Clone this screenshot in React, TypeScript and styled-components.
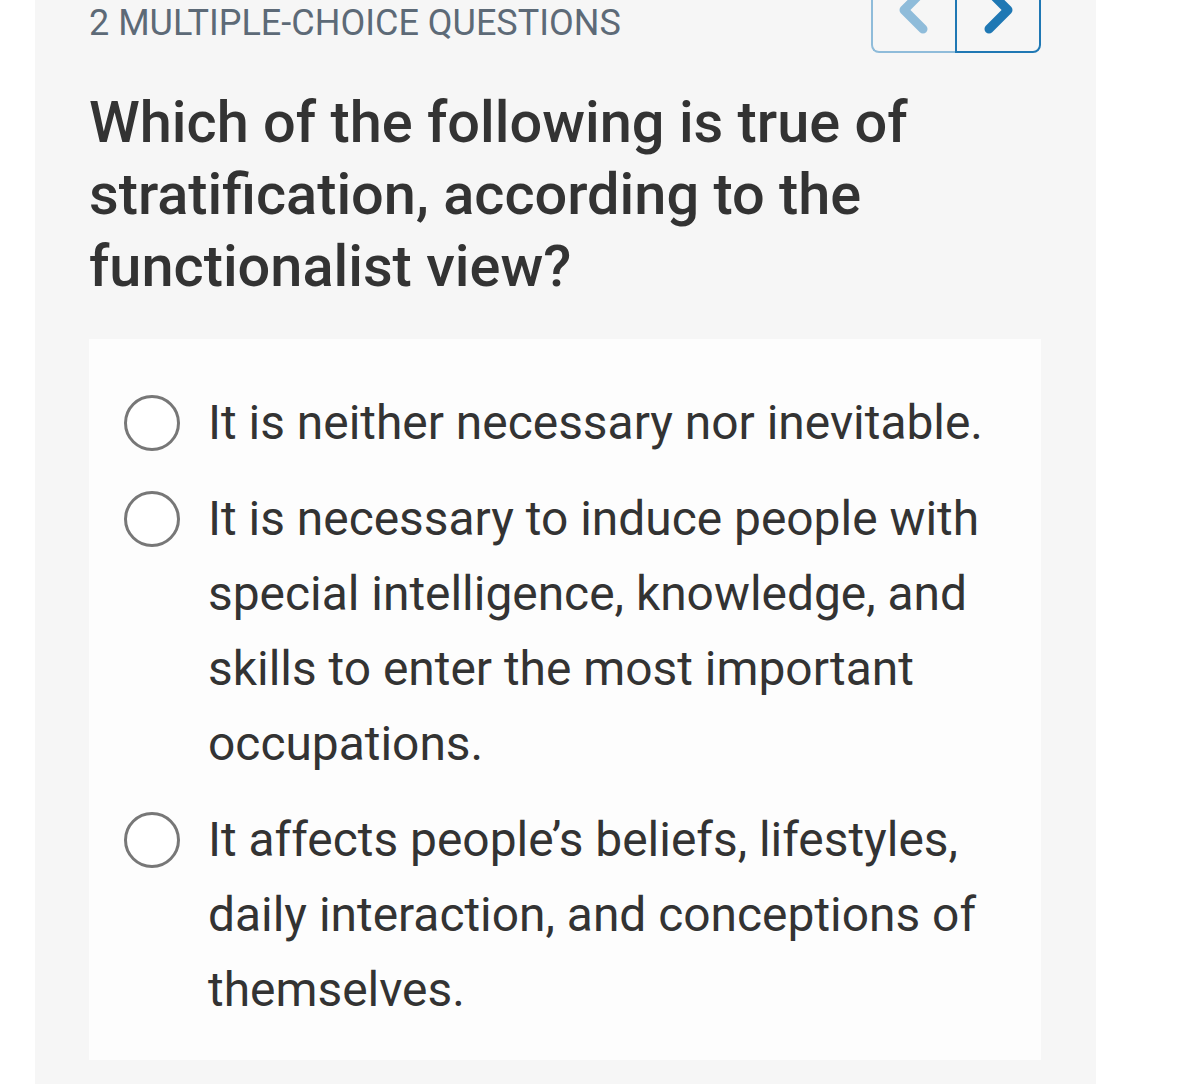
import React from 'react';
import styled, { createGlobalStyle } from 'styled-components';

interface ChevronProps {
  dir: 'left' | 'right';
}

interface NavButtonProps {
  active?: boolean;
}

const options = [
  'It is neither necessary nor inevitable.',
  'It is necessary to induce people with special intelligence, knowledge, and skills to enter the most important occupations.',
  'It affects people’s beliefs, lifestyles, daily interaction, and conceptions of themselves.',
];

const Chevron = ({ dir }: ChevronProps) => (
  <svg width="36" height="54" viewBox="0 0 36 54" fill="none">
    <path
      d={dir === 'left' ? 'M27 8 L8 27 L27 46' : 'M9 8 L28 27 L9 46'}
      stroke="currentColor"
      strokeWidth="9"
      strokeLinecap="round"
      strokeLinejoin="round"
    />
  </svg>
);

const App = () => {
  return (
    <>
      <GlobalStyle />
      <Panel>
        <HeaderRow>
          <SectionLabel>2 MULTIPLE-CHOICE QUESTIONS</SectionLabel>
          <NavGroup>
            <NavButton aria-label="previous">
              <Chevron dir="left" />
            </NavButton>
            <NavButton active aria-label="next">
              <Chevron dir="right" />
            </NavButton>
          </NavGroup>
        </HeaderRow>

        <Question>
          Which of the following is true of stratification, according to the
          functionalist view?
        </Question>

        <AnswerCard>
          {options.map((text) => (
            <Option key={text}>
              <Radio />
              <OptionText>{text}</OptionText>
            </Option>
          ))}
        </AnswerCard>
      </Panel>
    </>
  );
};

const GlobalStyle = createGlobalStyle`
  body {
    margin: 0;
    background: #ffffff;
    font-family: Roboto, "Noto Sans", sans-serif;
    overflow: hidden;
  }
`;

const Panel = styled.main`
  margin-left: 35px;
  width: 1061px;
  min-height: 1100px;
  box-sizing: border-box;
  padding: 0 55px 0 54px;
  background: #f6f6f6;
`;

const HeaderRow = styled.header`
  display: flex;
  justify-content: space-between;
  align-items: flex-start;
`;

const SectionLabel = styled.h3`
  margin: 0;
  padding-top: 2px;
  font-size: 36px;
  line-height: 43px;
  font-weight: 400;
  color: #5d6a77;
`;

const NavGroup = styled.div`
  display: flex;
  margin-top: -33px;
`;

const NavButton = styled.button<NavButtonProps>`
  display: flex;
  align-items: center;
  justify-content: center;
  box-sizing: border-box;
  height: 86px;
  width: ${({ active }) => (active ? '86px' : '84px')};
  padding: 0;
  background: transparent;
  border: 2px solid ${({ active }) => (active ? '#1f78b4' : '#8fbcda')};
  color: ${({ active }) => (active ? '#1f78b4' : '#8fbcda')};
  border-radius: ${({ active }) => (active ? '0 0 8px 0' : '0 0 0 8px')};
  ${({ active }) => !active && 'border-right: none;'}
  cursor: pointer;
`;

const Question = styled.h1`
  margin: 33px 0 37px;
  font-size: 57.7px;
  line-height: 72px;
  font-weight: 500;
  color: #333333;
`;

const AnswerCard = styled.section`
  display: flex;
  flex-direction: column;
  gap: 21px;
  background: #fdfdfd;
  padding: 47px 30px 32px 35px;
`;

const Option = styled.label`
  display: flex;
  align-items: flex-start;
  gap: 28px;
  cursor: pointer;
`;

const Radio = styled.span`
  flex-shrink: 0;
  box-sizing: border-box;
  width: 56px;
  height: 56px;
  margin-top: 9px;
  border: 3px solid #777777;
  border-radius: 50%;
  background: #ffffff;
`;

const OptionText = styled.p`
  margin: 0;
  font-size: 47.9px;
  line-height: 75px;
  color: #333333;
`;

export default App;
